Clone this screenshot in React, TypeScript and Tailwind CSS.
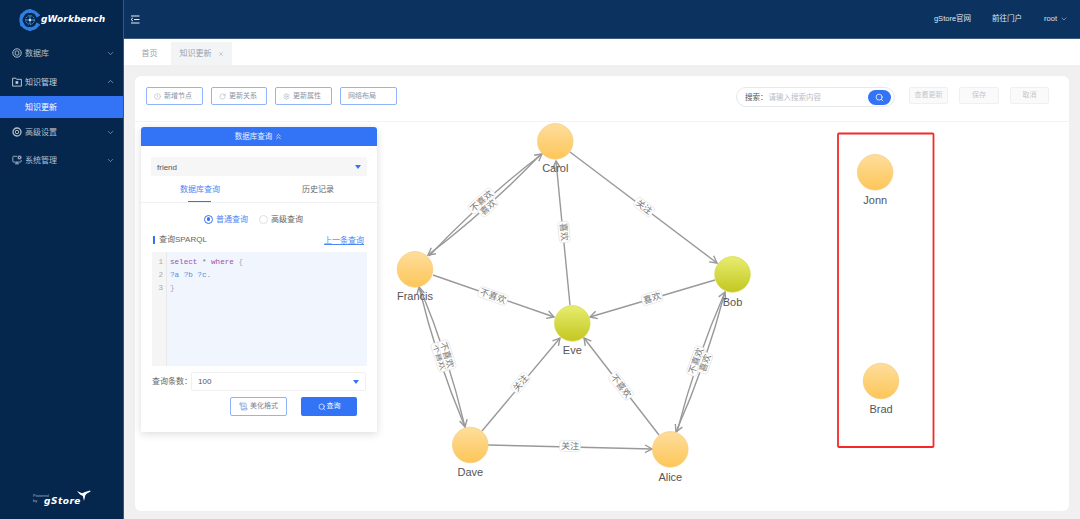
import { ChevronDown, ChevronUp, ChevronsUp, Search, X, CircleAlert, RotateCw, Settings, MonitorCog, ScrollText } from "lucide-react";

const cjk = "font-['Liberation_Sans','Noto_Sans_CJK_SC',sans-serif]";

const MenuItem = ({ icon, label }: { icon: React.ReactNode; label: string }) => (
  <div className="h-7 flex items-center pl-3 pr-[8px] text-[#b4bfcc] text-[8px]">
    <span className="w-[10px] mr-[3px] flex justify-center">{icon}</span>
    <span className="flex-1 pt-[2px]">{label}</span>
    <ChevronDown size={9} strokeWidth={1.5} />
  </div>
);

const DbIcon = () => (
  <svg width="10" height="10" viewBox="0 0 10 10" fill="none" stroke="currentColor">
    <circle cx="5" cy="5" r="4.2" strokeWidth="1" />
    <rect x="3.2" y="3" width="3.6" height="4" rx="1" strokeWidth="0.9" />
  </svg>
);

const FolderIcon = () => (
  <svg width="10" height="10" viewBox="0 0 10 10" fill="none" stroke="currentColor">
    <path d="M.6 1.2h3.2l.8 1.1h4.8v6.8H.6z" strokeWidth="0.9" />
    <rect x="3.6" y="4.2" width="2.6" height="2.6" fill="currentColor" stroke="none" />
  </svg>
);

const RingIcon = () => (
  <svg width="10" height="10" viewBox="0 0 10 10" fill="none" stroke="currentColor">
    <circle cx="5" cy="5" r="4" strokeWidth="1.3" />
    <circle cx="5" cy="5" r="1.7" strokeWidth="1" />
  </svg>
);

const Logo = () => (
  <div className="h-[39px] flex items-center pl-[18px]">
    <svg width="24" height="24" viewBox="0 0 24 24" className="mr-[-1px]">
      <g stroke="#2f7fe0" strokeWidth="2.6">
        <path d="M12 1v4M12 19v4M2.5 6.5l3.4 2M18.1 15.5l3.4 2M2.5 17.5l3.4-2M18.1 8.5l3.4-2" />
      </g>
      <path d="M20 8A9 9 0 1 0 20 16" fill="none" stroke="#2f7fe0" strokeWidth="3.2" />
      <circle cx="12" cy="12" r="4.4" fill="none" stroke="#5aa2f0" strokeWidth="1" strokeDasharray="1.6 1" />
      <path d="M12 8v8M8 12h8" stroke="#6fb0f5" strokeWidth="0.8" />
      <circle cx="12" cy="12" r="1.2" fill="#cfe5ff" />
    </svg>
    <span className="text-white text-[9px] font-bold italic tracking-[0.1px] font-['DejaVu_Sans',sans-serif]">gWorkbench</span>
  </div>
);

const Sidebar = () => (
  <aside className="w-[124px] shrink-0 bg-[#05274d] border-r border-[#3c5674] flex flex-col">
    <Logo />
    <div>
      <MenuItem icon={<DbIcon />} label="数据库" />
      <div className="h-[29px] flex items-center pl-3 pr-[8px] text-[#c9d2dc] text-[8px]">
        <span className="w-[10px] mr-[3px] flex justify-center"><FolderIcon /></span>
        <span className="flex-1 pt-[2px]">知识管理</span>
        <ChevronUp size={9} strokeWidth={1.5} />
      </div>
      <div className="h-[22px] bg-[#3374f6] text-white text-[8px] pl-[25px] pt-[2px] flex items-center">知识更新</div>
      <MenuItem icon={<RingIcon />} label="高级设置" />
      <MenuItem icon={<MonitorCog size={10} />} label="系统管理" />
    </div>
    <div className="mt-auto mb-[13px] pl-[33px] flex items-end">
      <div className="text-[#9fb0c4] text-[4px] leading-[5px] mb-[3px] w-[11px] whitespace-nowrap">Powered<br />by</div>
      <span className="text-white text-[9px] font-bold italic leading-[10px] tracking-[0.5px] font-['DejaVu_Sans',sans-serif]">gStore</span>
      <svg width="14" height="12" viewBox="0 0 14 12" className="-ml-[4px] mb-[4px]">
        <path d="M0 1l5 2.2L8 2l5-1.5.6 1-3.6 2-1.6 1.4L7 11 5.8 6 3 4.4z" fill="#fff" />
      </svg>
    </div>
  </aside>
);

const Header = () => (
  <header className="h-[39px] bg-[#0c3360] border-b border-[#3c5a7c] flex items-center text-[#dfe5ec] text-[7.5px]">
    <svg width="10" height="9" viewBox="0 0 10 9" className="ml-[6px]" stroke="#e8edf3" strokeWidth="1" fill="none">
      <path d="M1 1h8.5M4 4.5h5.5M1 8h8.5" />
      <path d="M3 2.8L1 4.5l2 1.7" />
    </svg>
    <div className="ml-auto flex items-center">
      <span>gStore官网</span>
      <span className="ml-[21px]">前往门户</span>
      <span className="ml-[22px]">root</span>
      <ChevronDown size={8} className="ml-[3px] mr-[12px]" strokeWidth={1.5} />
    </div>
  </header>
);

const Tabs = () => (
  <div className="h-[26px] bg-white flex items-end pl-1 text-[#9aa0a8] text-[8px]">
    <div className="h-[23px] w-[43px] flex items-center justify-center">首页</div>
    <div className="h-[23px] w-[61px] bg-[#f3f4f6] flex items-center justify-center gap-[6px]">
      <span>知识更新</span>
      <X size={6} />
    </div>
  </div>
);

const OutlineBtn = ({ icon, label, w }: { icon?: React.ReactNode; label: string; w: string }) => (
  <div className={`h-[18px] ${w} border border-[#8fb4f8] rounded-[2px] flex items-center pl-[7px] gap-[3px] text-[#8a94a3] text-[7px]`}>
    {icon}
    <span>{label}</span>
  </div>
);

const GhostBtn = ({ label, w }: { label: string; w: string }) => (
  <div className={`h-[17px] ${w} bg-[#fafafa] border border-[#f0f0f0] rounded-[2px] flex items-center justify-center text-[#c4c7cc] text-[7px]`}>
    {label}
  </div>
);

const Toolbar = () => (
  <div className="h-[46px] shrink-0 border-b border-[#f3f3f3] flex pl-[11px] pr-[20px]">
    <div className="flex gap-2 pt-[11px]">
      <OutlineBtn w="w-[57px]" label="新增节点" icon={<CircleAlert size={7} className="text-[#aab6c8]" />} />
      <OutlineBtn w="w-[56px]" label="更新关系" icon={<RotateCw size={7} className="text-[#aab6c8]" />} />
      <OutlineBtn w="w-[57px]" label="更新属性" icon={<Settings size={7} className="text-[#aab6c8]" />} />
      <OutlineBtn w="w-[57px]" label="网络布局" />
    </div>
    <div className="ml-auto flex items-start gap-[14px] pt-[11px]">
      <div className="h-5 w-[159px] border border-[#e6e8ec] rounded-[10px] flex items-center pl-2 pr-[3px] text-[7.5px]">
        <span className="text-[#555] pt-[2px]">搜索：</span>
        <span className="text-[#b9bdc4] ml-[1px] pt-[2px]">请输入搜索内容</span>
        <span className="ml-auto w-[23px] h-[15px] rounded-full bg-[#3374f6] flex items-center justify-center">
          <Search size={9} className="text-white" strokeWidth={2} />
        </span>
      </div>
      <div className="flex gap-[11px]">
        <GhostBtn w="w-[39px]" label="查看更新" />
        <GhostBtn w="w-[40px]" label="保存" />
        <GhostBtn w="w-[39px]" label="取消" />
      </div>
    </div>
  </div>
);

const QueryPanel = () => (
  <div className="w-[236px] h-[305px] bg-white rounded-t-[3px] shadow-[0_2px_8px_rgba(0,0,0,0.14)] text-[8px]">
    <div className="h-[19px] bg-[#3374f6] rounded-t-[3px] flex items-center justify-center text-[#e8f0ff] text-[7.5px] gap-[2px]">
      数据库查询 <ChevronsUp size={9} />
    </div>
    <div className="px-[10px] pt-[11px]">
      <div className="h-[19px] bg-[#f6f6f6] rounded-[2px] flex items-center justify-between px-[6px] text-[#555] text-[8px]">
        <span className="pt-[2px]">friend</span>
        <span className="border-x-[3px] border-x-transparent border-t-[4px] border-t-[#3374f6]" />
      </div>
    </div>
    <div className="h-[27px] border-b border-[#eef0f3] flex items-center text-[8px]">
      <div className="w-[118px] h-full relative flex items-center justify-center pt-[2px] text-[#4f86f7]">
        数据库查询
        <span className="absolute bottom-0 left-[47px] w-[23px] h-[1px] bg-[#3374f6]" />
      </div>
      <div className="w-[118px] text-center pt-[2px] text-[#666]">历史记录</div>
    </div>
    <div className="flex justify-center gap-[3px] items-center h-[32px] pr-[11px]">
      <span className="w-[9px] h-[9px] rounded-full border border-[#3374f6] flex items-center justify-center">
        <span className="w-[3.5px] h-[3.5px] rounded-full bg-[#3374f6]" />
      </span>
      <span className="text-[#4f86f7] pt-[2px]">普通查询</span>
      <span className="w-[9px] h-[9px] rounded-full border border-[#dcdfe6] ml-[8px]" />
      <span className="text-[#666] pt-[2px]">高级查询</span>
    </div>
    <div className="flex items-center justify-between pl-3 pr-[13px] h-[10px]">
      <span className="border-l-2 border-[#3374f6] pl-1 text-[#666] leading-[8px]">查询SPARQL</span>
      <span className="text-[#4f86f7] underline pt-[2px]">上一条查询</span>
    </div>
    <div className="ml-[11px] mr-[10px] mt-[7px] h-[114px] bg-[#f1f5fd] flex font-['Liberation_Mono',monospace] text-[7.6px] leading-[13px]">
      <div className="w-[15px] bg-[#f5f5f5] border-r border-[#e8e8e8] text-[#aaa] text-right pr-[3px] pt-[4px]">
        <div>1</div>
        <div>2</div>
        <div>3</div>
      </div>
      <div className="pl-[3px] pt-[4px]">
        <div><span className="text-[#a04fb0]">select</span> <span className="text-[#777]">*</span> <span className="text-[#a04fb0]">where</span> <span className="text-[#aaa]">{"{"}</span></div>
        <div className="text-[#5b93d6]">?a ?b ?c.</div>
        <div className="text-[#aaa]">{"}"}</div>
      </div>
    </div>
    <div className="flex items-center pl-[11px] mt-[6px] pr-[11px]">
      <span className="text-[#666] w-[39px] shrink-0 whitespace-nowrap">查询条数：</span>
      <div className="flex-1 h-[19px] border border-[#f0f0f0] rounded-[2px] flex items-center justify-between px-[6px] text-[#555]">
        100
        <span className="border-x-[3px] border-x-transparent border-t-[4px] border-t-[#3374f6]" />
      </div>
    </div>
    <div className="flex justify-end gap-[14px] pr-5 mt-[6px]">
      <div className="w-[57px] h-[19px] border border-[#8fb4f8] rounded-[2px] flex items-center justify-center gap-[2px] text-[#7c8696] text-[7px]">
        <ScrollText size={9} className="text-[#7f9fdc]" />美化格式
      </div>
      <div className="w-[56px] h-[19px] bg-[#3374f6] rounded-[2px] flex items-center justify-center gap-[1px] text-white text-[7px]">
        <Search size={8} />查询
      </div>
    </div>
  </div>
);

type Pt = [number, number];
const R = 17.8;

const nodes: { name: string; x: number; y: number; lime?: boolean; ly: number }[] = [
  { name: "Carol", x: 555.3, y: 141.4, ly: 172 },
  { name: "Francis", x: 415, y: 269.4, ly: 300 },
  { name: "Bob", x: 732.5, y: 274.4, ly: 306 },
  { name: "Eve", x: 572.3, y: 323.4, lime: true, ly: 354 },
  { name: "Dave", x: 470.3, y: 445, ly: 476 },
  { name: "Alice", x: 670.3, y: 449.4, ly: 481 },
  { name: "Jonn", x: 875.2, y: 172.3, ly: 204 },
  { name: "Brad", x: 881, y: 381, ly: 413 },
];

// bend: sideways bow of the curved pairs, in px
const edges: { a: Pt; b: Pt; text: string; at: Pt; bend?: number }[] = [
  { a: [541, 154], b: [428, 255], text: "不喜欢", at: [481.5, 201], bend: 3 },
  { a: [429, 256], b: [542, 154], text: "喜欢", at: [488, 207], bend: 3 },
  { a: [570, 152], b: [717, 263], text: "关注", at: [644, 207] },
  { a: [570, 305], b: [556, 161], text: "喜欢", at: [564, 232] },
  { a: [433, 275], b: [554, 317], text: "不喜欢", at: [493, 296] },
  { a: [715, 280], b: [590, 317], text: "喜欢", at: [652, 298] },
  { a: [420, 288], b: [465, 427], text: "不喜欢", at: [440, 357], bend: 3 },
  { a: [465, 427], b: [419, 287], text: "不喜欢", at: [447, 355], bend: 3 },
  { a: [482, 431], b: [560, 338], text: "关注", at: [520.5, 383] },
  { a: [659, 435], b: [584, 338], text: "不喜欢", at: [621, 386] },
  { a: [488, 445], b: [652, 449], text: "关注", at: [570, 446] },
  { a: [725, 292], b: [676, 432], text: "不喜欢", at: [696, 361], bend: 3 },
  { a: [677, 432], b: [725, 292], text: "喜欢", at: [705, 363], bend: 3 },
];

const Arrow = ({ a, b, bend = 0 }: { a: Pt; b: Pt; bend?: number }) => {
  const mx = (a[0] + b[0]) / 2;
  const my = (a[1] + b[1]) / 2;
  const len = Math.hypot(b[0] - a[0], b[1] - a[1]);
  // control point sits twice the bow away from the chord
  const cx = mx + ((b[1] - a[1]) / len) * bend * 2;
  const cy = my - ((b[0] - a[0]) / len) * bend * 2;
  const ang = Math.atan2(b[1] - cy, b[0] - cx);
  const tip = (d: number) => `${b[0] - 8 * Math.cos(ang + d)},${b[1] - 8 * Math.sin(ang + d)}`;
  return (
    <g stroke="#999" strokeWidth="1.4" fill="none">
      <path d={`M${a[0]} ${a[1]}Q${cx} ${cy} ${b[0]} ${b[1]}`} />
      <polyline points={`${tip(0.5)} ${b[0]},${b[1]} ${tip(-0.5)}`} />
    </g>
  );
};

const EdgeLabel = ({ a, b, text, at }: { a: Pt; b: Pt; text: string; at: Pt }) => {
  let deg = (Math.atan2(b[1] - a[1], b[0] - a[0]) * 180) / Math.PI;
  if (deg > 90) deg -= 180;
  if (deg < -90) deg += 180;
  const w = text.length * 9 + 3;
  return (
    <g transform={`translate(${at[0]} ${at[1]}) rotate(${deg})`}>
      <rect x={-w / 2} y="-5.5" width={w} height="11" rx="3" fill="#fff" stroke="#dedede" strokeWidth="0.6" />
      <text textAnchor="middle" y="3.2" fontSize="9" fill="#777" fontFamily="'Noto Sans CJK SC', sans-serif">{text}</text>
    </g>
  );
};

const Graph = () => (
  <svg viewBox="0 0 1080 519" className="absolute left-[-135px] top-[-122px] w-[1080px] h-[519px] pointer-events-none">
    <defs>
      <linearGradient id="orange" x1="0" y1="0" x2="0" y2="1">
        <stop offset="0" stopColor="#fedd9c" />
        <stop offset="1" stopColor="#fdc658" />
      </linearGradient>
      <linearGradient id="lime" x1="0" y1="0" x2="0" y2="1">
        <stop offset="0" stopColor="#e8ec70" />
        <stop offset="1" stopColor="#c2c820" />
      </linearGradient>
    </defs>
    <rect x="838" y="133.5" width="95.5" height="313.5" rx="1" fill="none" stroke="#f5282a" strokeWidth="1.8" />
    {edges.map((e, i) => <Arrow key={i} a={e.a} b={e.b} bend={e.bend} />)}
    {nodes.map((n) => (
      <g key={n.name}>
        <circle cx={n.x} cy={n.y} r={R} fill={n.lime || n.name === "Bob" ? "url(#lime)" : "url(#orange)"} stroke={n.lime || n.name === "Bob" ? "#d5d84e" : "#f7cc7e"} strokeWidth="0.7" />
        <text x={n.x} y={n.ly} textAnchor="middle" fontSize="11" fill="#555" fontFamily="'Liberation Sans', sans-serif">{n.name}</text>
      </g>
    ))}
    {edges.map((e, i) => <EdgeLabel key={i} a={e.a} b={e.b} text={e.text} at={e.at} />)}
  </svg>
);

export default function App() {
  return (
    <div className={`w-[1080px] h-[519px] flex overflow-hidden ${cjk}`}>
      <Sidebar />
      <main className="flex-1 flex flex-col bg-[#f0f0f0] min-w-0">
        <Header />
        <Tabs />
        <div className="flex-1 px-[11px] pt-[11px] pb-2">
          <div className="h-full bg-white rounded-[6px] flex flex-col">
            <Toolbar />
            <div className="flex-1 relative pl-[6px] pt-[5px]">
              <Graph />
              <div className="relative">
                <QueryPanel />
              </div>
            </div>
          </div>
        </div>
      </main>
    </div>
  );
}
